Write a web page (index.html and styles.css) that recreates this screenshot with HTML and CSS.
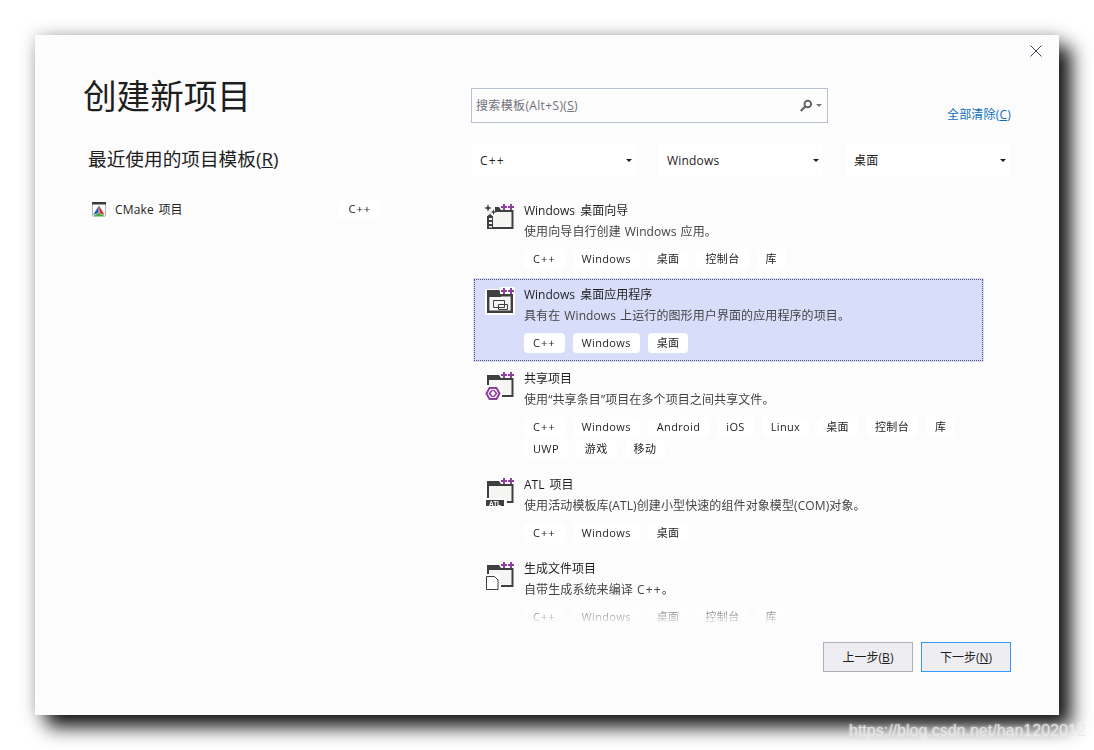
FILE: index.html
```html
<!DOCTYPE html>
<html lang="zh-CN">
<head>
<meta charset="utf-8">
<title>创建新项目</title>
<link rel="stylesheet" href="styles.css">
</head>
<body>
<svg class="defs" width="0" height="0" aria-hidden="true">
  <defs>
    <!-- folder outline with the tab, shared by every project template icon -->
    <g id="folder">
      <path d="M5 8h24.500v17H5z" fill="#f5f5f3" stroke="#3f3f3f" stroke-width="2"/>
      <path d="M4 4h12l2 3v2H4z" fill="#3f3f3f"/>
    </g>
    <path id="plus" fill="#8e3f9e" d="M18 3h6v2h-6zM20 1h2v6h-2zM25 3h6v2h-6zM27 1h2v6h-2z"/>
  </defs>
</svg>
<div class="dialog">
  <button class="close" aria-label="关闭">
    <svg width="12" height="12" viewBox="0 0 12 12"><path d="M.5.5l11 11M11.500.5l-11 11" stroke="#3c4450" fill="none"/></svg>
  </button>
  <div class="main">
    <section class="recent">
      <h1 class="title">创建新项目</h1>
      <h2 class="recent-heading">最近使用的项目模板(<u>R</u>)</h2>
      <div class="recent-row">
        <svg class="recent-icon" width="16" height="16" viewBox="0 0 16 16">
          <path d="M1.500 3v12M14.500 3v12" stroke="#b5b5b5" fill="none"/>
          <path d="M1 1h14v2.500H1z" fill="#3a3a3a"/>
          <path d="M8 4.500L2 14l5.500-2z" fill="#2a5fb0"/>
          <path d="M8 4.500l5.500 9.500-5-2z" fill="#d22b2b"/>
          <path d="M1.500 15.500l6-3.500 1 .2 6 3.300z" fill="#4aa84a"/>
        </svg>
        <span class="recent-name">CMake 项目</span>
        <span class="tag tag-cpp recent-tag">C++</span>
      </div>
    </section>
    <section class="browse">
      <div class="search-row">
        <div class="search">
          <span class="search-text">搜索模板(Alt+S)(<u>S</u>)</span>
          <svg width="14" height="14" viewBox="0 0 14 14"><circle cx="8.800" cy="5" r="3.300" fill="none" stroke="#666" stroke-width="2"/><path d="M6.300 7.500L1.800 12" stroke="#666" stroke-width="2.400" fill="none"/></svg>
          <span class="caret caret-grey"></span>
        </div>
        <a class="clear" href="#">全部清除(<u>C</u>)</a>
      </div>
      <div class="filters">
        <div class="filter"><span class="cpp">C++</span><span class="caret"></span></div>
        <div class="filter">Windows<span class="caret"></span></div>
        <div class="filter">桌面<span class="caret"></span></div>
      </div>
      <div class="list">
        <article class="item">
          <svg class="item-icon" width="32" height="32" viewBox="0 0 32 32">
            <use href="#folder"/>
            <path d="M4 4h8v9H4z" fill="#fcfcfd"/>
            <path d="M4 13h6v13H4z" fill="#3f3f3f"/>
            <path d="M6 15h3v2H6zM6 19h3v2H6zM6 23h3v1.500H6z" fill="#f5f5f3"/>
            <path d="M5 1l1 3 3 1-3 1-1 3-1-3-3-1 3-1zM10.500 6l.8 2.200 2.200.8-2.200.8-.8 2.200-.8-2.200-2.200-.8 2.200-.8zM7 10l.7 1.800 1.800.7-1.800.7L7 15l-.7-1.800-1.800-.7 1.800-.7z" fill="#3f3f3f"/>
            <use href="#plus"/>
          </svg>
          <div class="item-body">
            <div class="item-title">Windows 桌面向导</div>
            <div class="item-desc">使用向导自行创建 Windows 应用。</div>
            <div class="tags"><span class="tag tag-cpp">C++</span><span class="tag">Windows</span><span class="tag">桌面</span><span class="tag">控制台</span><span class="tag">库</span></div>
          </div>
        </article>
        <article class="item item-selected">
          <svg class="item-icon" width="32" height="32" viewBox="0 0 32 32">
            <path d="M2 2h14v5h16v21H2z" fill="#fff"/>
            <path d="M5.200 8.200h23.600v16.600H5.200z" fill="#f5f5f3" stroke="#3f3f3f" stroke-width="2.400"/>
            <path d="M4 3h12l2 3v4H4z" fill="#3f3f3f"/>
            <path d="M17 0h15v7H17z" fill="#fff"/>
            <path d="M10.500 13.500h11v7h-11zM15.500 17.500h9v5h-9z" fill="#f5f5f3" stroke="#3f3f3f"/>
            <use href="#plus"/>
          </svg>
          <div class="item-body">
            <div class="item-title">Windows 桌面应用程序</div>
            <div class="item-desc">具有在 Windows 上运行的图形用户界面的应用程序的项目。</div>
            <div class="tags"><span class="tag tag-cpp">C++</span><span class="tag">Windows</span><span class="tag">桌面</span></div>
          </div>
        </article>
        <article class="item">
          <svg class="item-icon" width="32" height="32" viewBox="0 0 32 32">
            <use href="#folder"/>
            <path d="M1 14h18v17H1z" fill="#fcfcfd"/>
            <path d="M6.500 17h7l3 5.500-3 5.500h-7l-3-5.500z" fill="#fff" stroke="#8e3f9e" stroke-width="2"/>
            <path d="M9.500 19l-3 3.500 3 3.500M10.500 19l3 3.500-3 3.500" fill="none" stroke="#8e3f9e" stroke-width="1.600"/>
            <use href="#plus"/>
          </svg>
          <div class="item-body">
            <div class="item-title">共享项目</div>
            <div class="item-desc">使用“共享条目”项目在多个项目之间共享文件。</div>
            <div class="tags"><span class="tag tag-cpp">C++</span><span class="tag">Windows</span><span class="tag">Android</span><span class="tag">iOS</span><span class="tag">Linux</span><span class="tag">桌面</span><span class="tag">控制台</span><span class="tag">库</span><span class="tag">UWP</span><span class="tag">游戏</span><span class="tag">移动</span></div>
          </div>
        </article>
        <article class="item">
          <svg class="item-icon" width="32" height="32" viewBox="0 0 32 32">
            <use href="#folder"/>
            <path d="M1 21h23v10H1z" fill="#fcfcfd"/>
            <rect x="3" y="23" width="18" height="6" fill="#3f3f3f"/>
            <text class="atl" x="12" y="28.500" text-anchor="middle">ATL</text>
            <use href="#plus"/>
          </svg>
          <div class="item-body">
            <div class="item-title">ATL 项目</div>
            <div class="item-desc">使用活动模板库(ATL)创建小型快速的组件对象模型(COM)对象。</div>
            <div class="tags"><span class="tag tag-cpp">C++</span><span class="tag">Windows</span><span class="tag">桌面</span></div>
          </div>
        </article>
        <article class="item">
          <svg class="item-icon" width="32" height="32" viewBox="0 0 32 32">
            <use href="#folder"/>
            <path d="M1 13h17v18H1z" fill="#fcfcfd"/>
            <path d="M3.500 15.500h8l3.500 3.500v9.500H3.500z" fill="#fff" stroke="#3f3f3f"/>
            <use href="#plus"/>
          </svg>
          <div class="item-body">
            <div class="item-title">生成文件项目</div>
            <div class="item-desc">自带生成系统来编译 <span class="cpp">C++</span>。</div>
            <div class="tags"><span class="tag tag-cpp">C++</span><span class="tag">Windows</span><span class="tag">桌面</span><span class="tag">控制台</span><span class="tag">库</span></div>
          </div>
        </article>
      </div>
    </section>
  </div>
  <footer class="footer">
    <button class="btn">上一步(<u>B</u>)</button>
    <button class="btn btn-default">下一步(<u>N</u>)</button>
  </footer>
</div>
<div class="watermark">https://blog.csdn.net/han1202012</div>
</body>
</html>
```

FILE: styles.css
```css
* { box-sizing: border-box; }

html, body { height: 100%; }

body {
  margin: 0;
  padding: 35px;
  background: #fff;
  overflow: hidden;
  font-family: "Open Sans", "Noto Sans CJK SC", sans-serif;
  font-size: 12px;
  color: #1e1e1e;
}

.defs { position: absolute; }

.cpp { letter-spacing: 1.200px; }

.dialog {
  position: relative;
  width: 1024px;
  height: 680px;
  display: flex;
  flex-direction: column;
  background: #fcfcfd;
  box-shadow: 12px 12px 18px rgba(0, 0, 0, .92), 0 0 16px rgba(0, 0, 0, .22);
}

.close {
  position: absolute;
  top: 10px;
  right: 17px;
  width: 12px;
  height: 12px;
  padding: 0;
  border: 0;
  background: none;
  display: block;
  line-height: 0;
}

.main {
  display: flex;
  height: 587px;
}

/* left column */
.recent { width: 436px; flex: none; }

.title {
  margin: 39px 0 0 48px;
  font-size: 33.600px;
  font-weight: 400;
  line-height: 44px;
  color: #1e1e1e;
}

.recent-heading {
  margin: 28px 0 0 53px;
  font-size: 18.670px;
  font-weight: 400;
  line-height: 26px;
  color: #1e1e1e;
}

.recent-row {
  display: flex;
  align-items: center;
  height: 20px;
  margin: 27px 0 0 56px;
}

.recent-icon { flex: none; }

.recent-name {
  margin-left: 8px;
  letter-spacing: .2px;
  word-spacing: 1px;
}

.recent-tag { margin-left: auto; margin-right: 91px; }

/* right column */
.browse {
  flex: 1;
  min-width: 0;
  display: flex;
  flex-direction: column;
  padding: 53px 48px 0 0;
}

.search-row { display: flex; align-items: flex-end; }

.search {
  width: 357px;
  height: 35px;
  display: flex;
  align-items: center;
  padding: 0 5px 0 4px;
  border: 1px solid #b5c0d5;
  background: #fcfcfd;
}

.search-text {
  flex: 1;
  position: relative;
  top: -1px;
  letter-spacing: .35px;
  color: #71717a;
}

.caret {
  width: 0;
  height: 0;
  border-left: 3px solid transparent;
  border-right: 3px solid transparent;
  border-top: 3px solid #1e1e1e;
}

.caret-grey { margin-left: 3px; border-top-color: #777; }

.clear {
  margin-left: auto;
  margin-bottom: -2px;
  line-height: 20px;
  letter-spacing: .2px;
  color: #0e70c0;
  text-decoration: none;
}

.filters {
  display: flex;
  gap: 23px;
  margin: 21px 0 0 1px;
}

.filter {
  width: 164px;
  height: 32px;
  display: flex;
  align-items: center;
  justify-content: space-between;
  padding: 0 4px 0 8px;
  background: #fff;
  letter-spacing: .2px;
}

.list {
  flex: 1;
  min-height: 0;
  width: 511px;
  margin: 18px 0 0 2px;
  overflow: hidden;
  -webkit-mask-image: linear-gradient(to bottom, #000 calc(100% - 22px), rgba(0, 0, 0, .12) 100%);
  mask-image: linear-gradient(to bottom, #000 calc(100% - 22px), rgba(0, 0, 0, .12) 100%);
}

.item {
  display: flex;
  padding: 8px 0 9px 10px;
}

.item-selected {
  background: #d8defa;
  outline: 1px dotted #4a4f63;
  outline-offset: -2px;
}

.item-icon { flex: none; margin: 1px 9px 0 0; }

.item-body { flex: 1; min-width: 0; }

.item-title {
  line-height: 18px;
  word-spacing: 2px;
}

.item-desc {
  margin-top: 2px;
  line-height: 20px;
  letter-spacing: .1px;
  word-spacing: .8px;
  color: #444;
}

.tags {
  display: flex;
  flex-wrap: wrap;
  gap: 2px 8px;
  margin-top: 7px;
}

.tag {
  height: 20px;
  padding: 0 9px;
  border-radius: 4px;
  background: #fff;
  font-size: 11px;
  line-height: 20px;
  letter-spacing: .35px;
  color: #1e1e1e;
}

.tag-cpp { letter-spacing: 1px; }

.atl {
  font-family: "Liberation Sans", sans-serif;
  font-size: 6.500px;
  font-weight: 700;
  fill: #fff;
}

/* footer buttons */
.footer {
  display: flex;
  justify-content: flex-end;
  gap: 8px;
  padding: 20px 48px 0 0;
}

.btn {
  width: 90px;
  height: 30px;
  padding: 0;
  border: 1px solid #b0b0b4;
  background: #eeeef2;
  font: inherit;
  color: #1e1e1e;
}

.btn-default { border-color: #3399ff; }

.watermark {
  position: absolute;
  left: 849px;
  top: 722px;
  font-family: "Liberation Sans", sans-serif;
  font-size: 16px;
  line-height: 18px;
  color: rgba(232, 232, 232, .9);
  text-shadow: 0 0 3px rgba(255, 255, 255, .8);
}
```
